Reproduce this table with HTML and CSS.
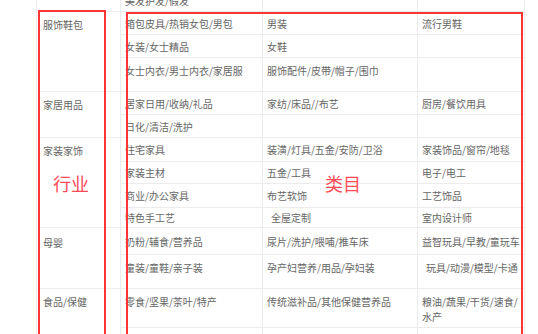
FILE: index.html
```html
<!DOCTYPE html>
<html lang="zh-CN">
<head>
<meta charset="utf-8">
<title>行业类目</title>
<link rel="stylesheet" href="styles.css">
</head>
<body>
<div class="page">
  <div class="wrap">
    <table class="cats">
      <colgroup>
        <col class="c1"><col class="c2"><col class="c3"><col class="c4">
      </colgroup>
      <tr class="r23">
        <td class="ind"></td><td>美发护发/假发</td><td></td><td></td>
      </tr>
      <tr class="r23">
        <td class="ind" rowspan="3">服饰鞋包</td><td>箱包皮具/热销女包/男包</td><td>男装</td><td>流行男鞋</td>
      </tr>
      <tr class="r23">
        <td>女装/女士精品</td><td>女鞋</td><td></td>
      </tr>
      <tr class="r34 top">
        <td>女士内衣/男士内衣/家居服</td><td>服饰配件/皮带/帽子/围巾</td><td></td>
      </tr>
      <tr class="r23">
        <td class="ind" rowspan="2">家居用品</td><td>居家日用/收纳/礼品</td><td>家纺/床品//布艺</td><td>厨房/餐饮用具</td>
      </tr>
      <tr class="r23">
        <td>日化/清洁/洗护</td><td></td><td></td>
      </tr>
      <tr class="r24">
        <td class="ind" rowspan="4">家装家饰</td><td>住宅家具</td><td>装潢/灯具/五金/安防/卫浴</td><td>家装饰品/窗帘/地毯</td>
      </tr>
      <tr class="r22">
        <td>家装主材</td><td>五金/工具</td><td>电子/电工</td>
      </tr>
      <tr class="r24">
        <td>商业/办公家具</td><td>布艺软饰</td><td>工艺饰品</td>
      </tr>
      <tr class="r20">
        <td>特色手工艺</td><td class="sp">全屋定制</td><td>室内设计师</td>
      </tr>
      <tr class="r27">
        <td class="ind ind-low" rowspan="2">母婴</td><td>奶粉/辅食/营养品</td><td>尿片/洗护/喂哺/推车床</td><td>益智玩具/早教/童玩车</td>
      </tr>
      <tr class="r34 top">
        <td>童装/童鞋/亲子装</td><td>孕产妇营养/用品/孕妇装</td><td class="sp">玩具/动漫/模型/卡通</td>
      </tr>
      <tr class="r39 top">
        <td class="ind" rowspan="2">食品/保健</td><td>零食/坚果/茶叶/特产</td><td>传统滋补品/其他保健营养品</td><td>粮油/蔬果/干货/速食/水产</td>
      </tr>
      <tr class="r23">
        <td>酒类/饮料/冲饮</td><td>进口食品</td><td></td>
      </tr>
    </table>
    <div class="box box-ind"></div>
    <div class="box box-cat"></div>
    <span class="tag tag-ind">行业</span>
    <span class="tag tag-cat">类目</span>
  </div>
</div>
</body>
</html>
```
FILE: styles.css
```css
html, body {
  margin: 0;
  padding: 0;
  background: #fff;
}
.page {
  width: 538px;
  height: 334px;
  overflow: hidden;
  padding-left: 36px;
  box-sizing: border-box;
  font-family: "Noto Sans CJK SC", "Noto Sans", sans-serif;
  font-size: 10px;
  color: #666;
}
.wrap {
  position: relative;
  margin-top: -12px;
  width: 489px;
}
.cats {
  border-collapse: collapse;
  table-layout: fixed;
  width: 489px;
}
.c1 { width: 84px; }
.c2 { width: 142px; }
.c3 { width: 155px; }
.c4 { width: 107px; }
.cats td {
  border: 1px solid #ececec;
  padding: 0 0 0 4px;
  line-height: 15px;
  vertical-align: middle;
  overflow: hidden;
}
.cats td.ind {
  vertical-align: top;
  padding: 5px 4px 0 6px;
}
.cats td.ind-low {
  padding-top: 7px;
}
.cats tr.top td {
  vertical-align: top;
  padding-top: 5px;
}
.cats td.sp {
  padding-left: 8px;
}
.r20 { height: 20px; }
.r22 { height: 22px; }
.r23 { height: 23px; }
.r24 { height: 24px; }
.r27 { height: 27px; }
.r34 { height: 34px; }
.r39 { height: 39px; }

.box {
  position: absolute;
  border: 2px solid #ff3434;
  border-bottom: none;
  bottom: -40px;
}
.box-ind {
  left: 2px;
  top: 22px;
  width: 64px;
}
.box-cat {
  left: 90px;
  top: 24px;
  width: 393px;
}
.tag {
  position: absolute;
  font-size: 18px;
  line-height: 20px;
  color: #ff4a55;
}
.tag-ind {
  left: 17px;
  top: 185px;
}
.tag-cat {
  left: 289px;
  top: 185px;
}
```
